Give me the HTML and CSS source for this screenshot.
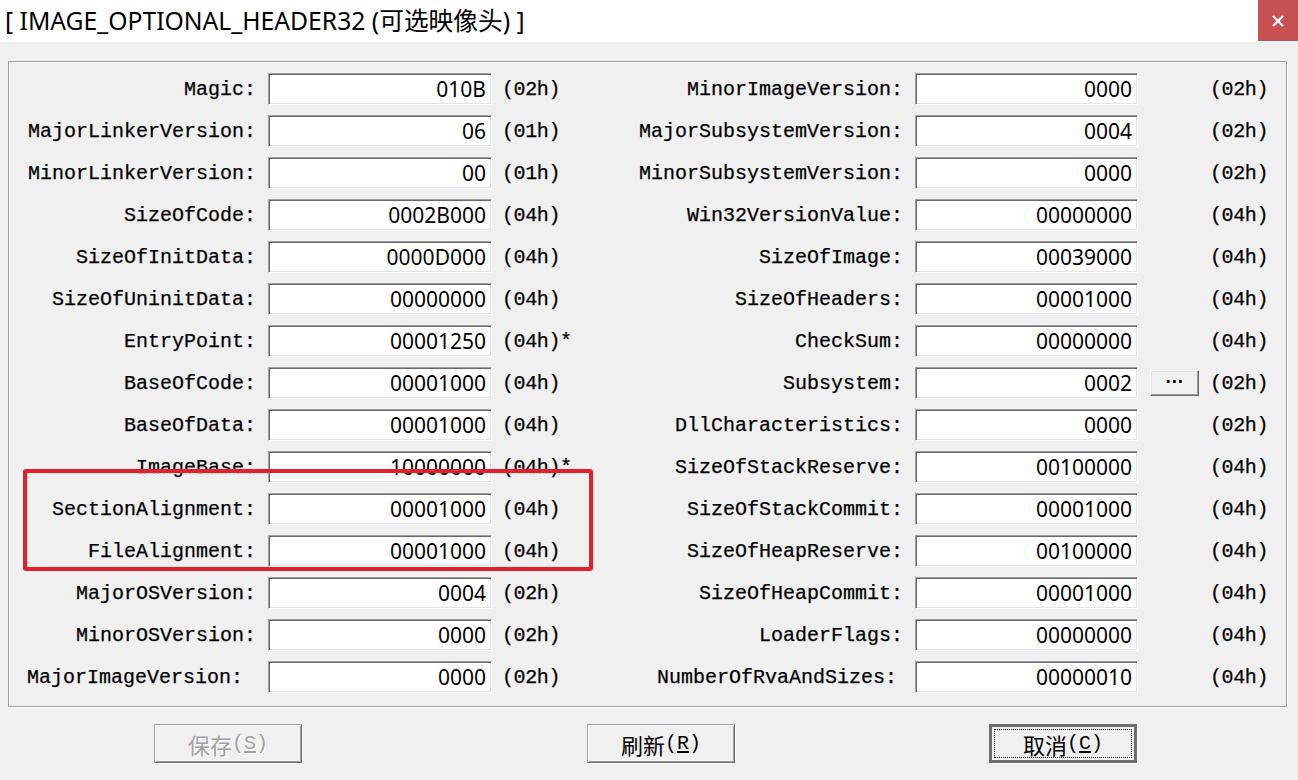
FILE: index.html
```html
<!DOCTYPE html>
<html lang="zh-CN">
<head>
<meta charset="utf-8">
<title>IMAGE_OPTIONAL_HEADER32</title>
<link rel="stylesheet" href="styles.css">
</head>
<body>
<div class="window">
  <div class="titlebar">
    <span class="title">[ IMAGE_OPTIONAL_HEADER32 (可选映像头) ]</span>
    <div class="close">
      <svg width="12" height="12" viewBox="0 0 12 12"><path d="M1 1 L11 11 M11 1 L1 11" stroke="#fff" stroke-width="2.2" fill="none"/></svg>
    </div>
  </div>
  <div class="body">
    <div class="group">
      <div class="grid">
        <span class="lbl">Magic:</span><span class="field">010B</span><span class="unit">(02h)</span>
        <span class="lbl">MinorImageVersion:</span><span class="field">0000</span><span class="extra"></span><span class="unit">(02h)</span>

        <span class="lbl">MajorLinkerVersion:</span><span class="field">06</span><span class="unit">(01h)</span>
        <span class="lbl">MajorSubsystemVersion:</span><span class="field">0004</span><span class="extra"></span><span class="unit">(02h)</span>

        <span class="lbl">MinorLinkerVersion:</span><span class="field">00</span><span class="unit">(01h)</span>
        <span class="lbl">MinorSubsystemVersion:</span><span class="field">0000</span><span class="extra"></span><span class="unit">(02h)</span>

        <span class="lbl">SizeOfCode:</span><span class="field">0002B000</span><span class="unit">(04h)</span>
        <span class="lbl">Win32VersionValue:</span><span class="field">00000000</span><span class="extra"></span><span class="unit">(04h)</span>

        <span class="lbl">SizeOfInitData:</span><span class="field">0000D000</span><span class="unit">(04h)</span>
        <span class="lbl">SizeOfImage:</span><span class="field">00039000</span><span class="extra"></span><span class="unit">(04h)</span>

        <span class="lbl">SizeOfUninitData:</span><span class="field">00000000</span><span class="unit">(04h)</span>
        <span class="lbl">SizeOfHeaders:</span><span class="field">00001000</span><span class="extra"></span><span class="unit">(04h)</span>

        <span class="lbl">EntryPoint:</span><span class="field">00001250</span><span class="unit">(04h)*</span>
        <span class="lbl">CheckSum:</span><span class="field">00000000</span><span class="extra"></span><span class="unit">(04h)</span>

        <span class="lbl">BaseOfCode:</span><span class="field">00001000</span><span class="unit">(04h)</span>
        <span class="lbl">Subsystem:</span><span class="field">0002</span><span class="extra"><span class="dots">...</span></span><span class="unit">(02h)</span>

        <span class="lbl">BaseOfData:</span><span class="field">00001000</span><span class="unit">(04h)</span>
        <span class="lbl">DllCharacteristics:</span><span class="field">0000</span><span class="extra"></span><span class="unit">(02h)</span>

        <span class="lbl">ImageBase:</span><span class="field">10000000</span><span class="unit">(04h)*</span>
        <span class="lbl">SizeOfStackReserve:</span><span class="field">00100000</span><span class="extra"></span><span class="unit">(04h)</span>

        <span class="lbl">SectionAlignment:</span><span class="field">00001000</span><span class="unit">(04h)</span>
        <span class="lbl">SizeOfStackCommit:</span><span class="field">00001000</span><span class="extra"></span><span class="unit">(04h)</span>

        <span class="lbl">FileAlignment:</span><span class="field">00001000</span><span class="unit">(04h)</span>
        <span class="lbl">SizeOfHeapReserve:</span><span class="field">00100000</span><span class="extra"></span><span class="unit">(04h)</span>

        <span class="lbl">MajorOSVersion:</span><span class="field">0004</span><span class="unit">(02h)</span>
        <span class="lbl">SizeOfHeapCommit:</span><span class="field">00001000</span><span class="extra"></span><span class="unit">(04h)</span>

        <span class="lbl">MinorOSVersion:</span><span class="field">0000</span><span class="unit">(02h)</span>
        <span class="lbl">LoaderFlags:</span><span class="field">00000000</span><span class="extra"></span><span class="unit">(04h)</span>

        <span class="lbl lbl-pad">MajorImageVersion:</span><span class="field">0000</span><span class="unit">(02h)</span>
        <span class="lbl lbl-pad-s">NumberOfRvaAndSizes:</span><span class="field">00000010</span><span class="extra"></span><span class="unit">(04h)</span>
      </div>
    </div>
    <div class="buttons">
      <div class="btn btn-save disabled"><span class="cjk">保存</span>(<u>S</u>)</div>
      <div class="btn btn-refresh"><span class="cjk">刷新</span>(<u>R</u>)</div>
      <div class="btn btn-cancel default"><span class="focus"><span class="cjk">取消</span>(<u>C</u>)</span></div>
    </div>
    <div class="highlight"></div>
  </div>
</div>
</body>
</html>
```
FILE: styles.css
```css
html, body {
  margin: 0;
  padding: 0;
  background: #f0f0f0;
}

.window {
  width: 1298px;
  height: 780px;
  position: relative;
  background: #f0f0f0;
  overflow: hidden;
}

.titlebar {
  height: 42px;
  background: #ffffff;
  display: flex;
  justify-content: space-between;
  align-items: flex-start;
}

.title {
  font-family: "Noto Sans", "Noto Sans CJK SC", sans-serif;
  font-size: 24.7px;
  line-height: 42px;
  color: #000;
  padding-left: 5px;
  white-space: pre;
}

.close {
  width: 40px;
  height: 41px;
  background: #c75050;
  display: flex;
  align-items: center;
  justify-content: center;
}

.body {
  padding-top: 19px;
}

.group {
  margin-left: 8px;
  width: 1279px;
  box-sizing: border-box;
  border: 1px solid #a0a0a0;
  box-shadow: 1px 1px 0 #ffffff, inset 1px 1px 0 #ffffff;
  padding: 11px 0 13px 2px;
}

.grid {
  display: grid;
  grid-template-columns: 245px 224px 80px 307px 223px 50px 1fr;
  grid-auto-rows: 32px;
  column-gap: 12px;
  row-gap: 10px;
  align-items: center;
}

.lbl, .unit {
  font-family: "Liberation Mono", "DejaVu Sans Mono", monospace;
  font-size: 20px;
  line-height: 32px;
  padding-top: 2px;
  color: #000;
  white-space: pre;
  -webkit-text-stroke: 0.25px #000;
}

.lbl {
  text-align: right;
}

.lbl-pad {
  padding-right: 13px;
}

.lbl-pad-s {
  padding-right: 6px;
}

.unit {
  margin-left: -2px;
  letter-spacing: -0.4px;
}

.field {
  height: 32px;
  box-sizing: border-box;
  background: #ffffff;
  border: 1px solid;
  border-color: #a0a0a0 #ffffff #ffffff #a0a0a0;
  box-shadow: inset 1px 1px 0 #696969, inset -1px -1px 0 #e3e3e3;
  font-family: "Noto Sans", "Liberation Sans", sans-serif;
  font-size: 21px;
  line-height: 31px;
  text-align: right;
  padding-right: 5px;
  color: #000;
}

.extra {
  display: flex;
  align-items: center;
}

.dots {
  width: 49px;
  height: 26px;
  box-sizing: border-box;
  border: 1px solid;
  border-color: #ffffff #696969 #696969 #ffffff;
  box-shadow: inset -1px -1px 0 #a0a0a0, inset 1px 1px 0 #e3e3e3;
  background: #f0f0f0;
  font-family: "DejaVu Sans", sans-serif;
  font-weight: bold;
  font-size: 15px;
  line-height: 14px;
  text-align: center;
  color: #000;
  letter-spacing: 0.5px;
}

.buttons {
  display: flex;
  margin-top: 17px;
  padding-left: 154px;
}

.btn {
  width: 148px;
  height: 39px;
  box-sizing: border-box;
  border: 1px solid;
  border-color: #a0a0a0 #696969 #696969 #a0a0a0;
  box-shadow: 1px 1px 0 #ffffff, inset 1px 1px 0 #ffffff, inset -1px -1px 0 #a0a0a0;
  background: #f0f0f0;
  display: flex;
  align-items: center;
  justify-content: center;
  font-family: "Liberation Mono", "Noto Sans CJK SC", monospace;
  font-size: 20px;
  color: #000;
}

.btn u {
  text-underline-offset: 2px;
}

.cjk {
  font-family: "Noto Sans CJK SC", sans-serif;
  font-size: 22px;
}

.btn-refresh {
  margin-left: 285px;
}

.btn-cancel {
  margin-left: 254px;
}

.disabled {
  color: #a0a0a0;
  text-shadow: 1px 1px 0 #ffffff;
}

.default {
  border: 3px solid #6d6d6d;
  box-shadow: 1px 1px 0 #ffffff;
}

.focus {
  display: flex;
  align-items: center;
  justify-content: center;
  width: 138px;
  height: 29px;
  box-sizing: border-box;
  border: 1px dotted #000;
}

.highlight {
  position: absolute;
  left: 23px;
  top: 469px;
  width: 570px;
  height: 102px;
  box-sizing: border-box;
  border: 4px solid #e5202b;
  border-radius: 3px;
  pointer-events: none;
}
```
